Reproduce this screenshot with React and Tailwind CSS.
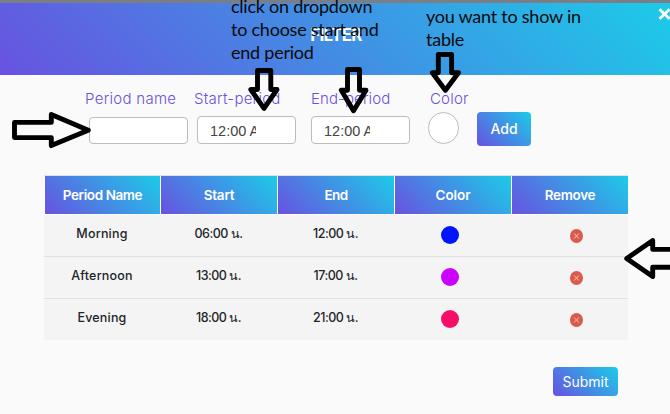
import React from "react";

const GRADIENT = "bg-[linear-gradient(45deg,#6852e0,#1ccbe8)]";

const columns = [
  { title: "Period Name", cls: "tracking-[-0.4px]" },
  { title: "Start", cls: "tracking-[-0.2px]" },
  { title: "End", cls: "tracking-[-0.7px]" },
  { title: "Color", cls: "tracking-[-0.1px]" },
  { title: "Remove", cls: "tracking-[-0.3px]" },
];

const rows = [
  { name: "Morning", start: "06:00", end: "12:00", dot: "bg-[#0014ff]" },
  { name: "Afternoon", start: "13:00", end: "17:00", dot: "bg-[#cc00ff]" },
  { name: "Evening", start: "18:00", end: "21:00", dot: "bg-[#f50f68]" },
];

function Time({ value }) {
  return (
    <span className="whitespace-nowrap tracking-[-0.5px]">
      {value} <span>น.</span>
    </span>
  );
}

function RemoveIcon() {
  return (
    <svg width="13" height="14" viewBox="0 0 13 14">
      <ellipse cx="6.5" cy="7" rx="6.5" ry="7" fill="#dc5a4b" />
      <path d="M4.2 4.5 8.8 9.5M8.8 4.5 4.2 9.5" stroke="#f3c3bd" strokeWidth="1" />
    </svg>
  );
}

function Header() {
  return (
    <header className={"relative flex h-[72px] items-center justify-center " + GRADIENT}>
      <h1 className="mt-[-7px] pl-[2px] text-[17px] font-bold tracking-[-0.7px] text-white">FILTER</h1>
      <svg className="absolute right-0 top-[5px]" width="12" height="12" viewBox="0 0 12 12">
        <path d="M1.5 1.2 11.5 10.8M11.5 1.2 1.5 10.8" stroke="#fff" strokeWidth="2.8" />
      </svg>
    </header>
  );
}

function Form() {
  const label = "h-[24px] whitespace-nowrap text-[15px] font-light leading-[24px] text-[#6a50e0]";
  const input = "w-[99px] rounded-[4px] border border-[#bcbcbc] bg-white";
  return (
    <section className="flex h-[100px] items-start pl-[85px] pt-[12px]">
      <div className="w-[109px]">
        <div className={label + " tracking-[0.3px]"}>Period name</div>
        <div className={input + " ml-[4px] mt-[6px] h-[27px]"} />
      </div>
      <div className="w-[117px]">
        <div className={label + " tracking-[0.25px]"}>Start-period</div>
        <div className={input + " ml-[3px] mt-[5px] h-[28px] pl-[12px]"}>
          <div className="w-[46px] overflow-hidden whitespace-nowrap font-['Liberation_Sans',sans-serif] text-[14.5px] leading-[28px] text-[#444]">12:00 AM</div>
        </div>
      </div>
      <div className="w-[117px]">
        <div className={label + " tracking-[0.1px]"}>End-period</div>
        <div className={input + " mt-[5px] h-[28px] pl-[12px]"}>
          <div className="w-[46px] overflow-hidden whitespace-nowrap font-['Liberation_Sans',sans-serif] text-[14.5px] leading-[28px] text-[#444]">12:00 AM</div>
        </div>
      </div>
      <div className="w-[49px]">
        <div className={label + " pl-[2px] tracking-[0.2px]"}>Color</div>
        <div className="mt-[1px] h-[32px] w-[31px] rounded-full border border-[#bcbcbc] bg-white" />
      </div>
      <button className={"mt-[25px] h-[34px] w-[54px] rounded-[4px] pb-[2px] text-[14px] font-medium text-white " + GRADIENT}>Add</button>
    </section>
  );
}

function PeriodTable() {
  return (
    <section className="ml-[44px] w-[584px] border-t border-[#dee2e6] text-[#212529]">
      <div className="grid h-[39px] grid-cols-[116px_117px_117px_117px_117px] border-b border-white">
        {columns.map((c) => (
          <div key={c.title} className="border-l border-white">
            <div className={"flex h-[38px] items-center justify-center text-[13.5px] font-semibold text-white " + GRADIENT + " " + c.cls}>{c.title}</div>
          </div>
        ))}
      </div>
      {rows.map((r, i) => (
        <div key={r.name} className={"grid grid-cols-[116px_117px_117px_117px_117px] items-center justify-items-center bg-[#f4f4f4] pb-[2px] text-[12.5px] font-medium " + (i < 2 ? "h-[42px] border-b border-[#dee0e2]" : "h-[41px]")}>
          <span className="tracking-[0.2px]">{r.name}</span>
          <Time value={r.start} />
          <Time value={r.end} />
          <span className={"mr-[6px] size-[18px] rounded-full " + r.dot} />
          <span className="pl-[13px] pt-[3px]"><RemoveIcon /></span>
        </div>
      ))}
    </section>
  );
}

function Annotations() {
  const note = "absolute whitespace-nowrap font-['Lato',sans-serif] text-[18px] leading-[23px] tracking-[-0.24px] text-[#0a0a0a]";
  return (
    <div className="pointer-events-none absolute inset-0 overflow-hidden">
      <div className={note + " left-[231px] top-[-5px]"}>
        <div>click on dropdown</div>
        <div>to choose start and</div>
        <div>end period</div>
      </div>
      <div className={note + " left-[426px] top-[5px]"}>
        <div>you want to show in</div>
        <div>table</div>
      </div>
      <svg className="absolute inset-0" width="670" height="414" viewBox="0 0 670 414" fill="none" stroke="#000" strokeWidth="4.9" strokeLinejoin="round">
        <path d="M257.5 70.5H270.8V89.5H277L264 108.3 250.8 89.5H257.5Z" />
        <path d="M347.5 69.5H359.5V90.2H366L353.5 110.8 341.3 90.2H347.5Z" />
        <path d="M438.3 54.5H451.6V72.7H458.5L445.4 90.3 432.3 72.7H438.3Z" />
        <path d="M14.5 122.4H51.3V114.5L88.3 130.3 51.3 145.6V137.6H14.5Z" />
        <path d="M674 249.4H652.7V240.5L626.7 258.5 652.7 276.5V267.3H674Z" />
      </svg>
    </div>
  );
}

export default function App() {
  return (
    <main className="relative h-[414px] w-[670px] overflow-hidden bg-[#fafafa] font-['Inter','Noto_Sans',sans-serif]">
      <div className="h-[3px] bg-[#7b7e84]" />
      <Header />
      <Form />
      <PeriodTable />
      <div className="mr-[52px] mt-[27px] flex justify-end">
        <button className={"h-[29px] w-[65px] rounded-[4px] text-[14px] text-white " + GRADIENT}>Submit</button>
      </div>
      <Annotations />
    </main>
  );
}
